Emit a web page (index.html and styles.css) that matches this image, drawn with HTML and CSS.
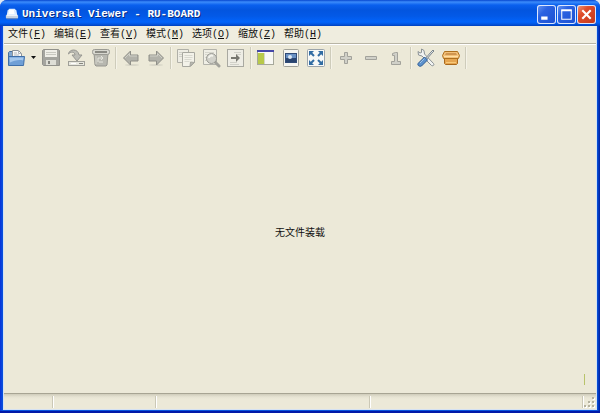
FILE: index.html
```html
<!DOCTYPE html>
<html lang="zh-CN">
<head>
<meta charset="utf-8">
<meta name="viewport" content="width=device-width, initial-scale=1">
<title>Universal Viewer - RU-BOARD</title>
<link rel="stylesheet" href="styles.css">
</head>
<body>
<div class="window">
  <header class="titlebar">
    <svg class="app-icon" viewBox="0 0 16 16" aria-hidden="true"><path d="M3 4l2-2h6l2 2 1 5H2z" fill="#dcecff"/><path d="M5 3h5l1 5H4z" fill="#fff"/><rect x="1" y="9" width="14" height="4" rx="1" fill="#c9d3e0"/><path d="M2 9.500h12" stroke="#fff"/><path d="M2 13.500h12" stroke="#697fa8"/></svg>
    <h1 class="title">Universal Viewer - RU-BOARD</h1>
    <div class="controls">
      <button class="control" type="button" aria-label="最小化"><svg viewBox="0 0 18 18"><path d="M4 12.500h6" stroke="#fff" stroke-width="3"/></svg></button>
      <button class="control" type="button" aria-label="最大化"><svg viewBox="0 0 18 18"><path d="M4.500 5v8.500h9V5" fill="none" stroke="#fff"/><path d="M4 5h10" stroke="#fff" stroke-width="2"/></svg></button>
      <button class="control control-close" type="button" aria-label="关闭"><svg viewBox="0 0 18 18"><path d="M5 5l8 8M13 5l-8 8" stroke="#fff" stroke-width="2"/></svg></button>
    </div>
  </header>
  <div class="client">
    <nav class="menubar">
      <button class="menu" type="button">文件(<u>F</u>)</button>
      <button class="menu" type="button">编辑(<u>E</u>)</button>
      <button class="menu" type="button">查看(<u>V</u>)</button>
      <button class="menu" type="button">模式(<u>M</u>)</button>
      <button class="menu" type="button">选项(<u>O</u>)</button>
      <button class="menu" type="button">缩放(<u>Z</u>)</button>
      <button class="menu" type="button">帮助(<u>H</u>)</button>
    </nav>
    <div class="toolbar" role="toolbar">
      <button class="tool" type="button" aria-label="打开"><svg viewBox="0 0 20 20"><path d="M2.500 16V4.500l1-1h4l1 2h7V16z" fill="#83a8d0" stroke="#466f9e"/><path d="M6.500 10V2.500h6l3 3V10z" fill="#fafafa" stroke="#8c9297"/><path d="M12.500 2.500v3h3M8 5h3M8 7h5" fill="none" stroke="#b3b8bc"/><path d="M2.500 8.500h16l-1 9H2.500z" fill="#6f9fd6" stroke="#3f6fa9"/><path d="M3.500 9.500h14l-.500 3c-4-1-9 0-13 2z" fill="#a5c8ed"/></svg></button>
      <button class="tool tool-drop" type="button" aria-label="最近的文件"><svg viewBox="0 0 7 20"><path d="M1 8h5L3.500 11z" fill="#111"/></svg></button>
      <button class="tool" type="button" aria-label="保存"><svg viewBox="0 0 20 20"><path d="M1.500 2.500l1-1h15l1 1v15h-16l-1-1z" fill="#a5a59f" stroke="#92928c"/><path d="M4 2h12v7H4z" fill="#f0efe8"/><path d="M5 4.500h10M5 6.500h10" stroke="#c9c9c1"/><path d="M5 12h10v5H5z" fill="#deded6"/><path d="M7 13h2v3H7z" fill="#85857f"/></svg></button>
      <button class="tool" type="button" aria-label="另存为"><svg viewBox="0 0 20 20"><path d="M2.500 6C3 1 12 0 13 7h3l-5 6-5-6h3C9 4 5 3 2.500 6z" fill="#bdbdb5" stroke="#969690"/><rect x="2.500" y="13.500" width="16" height="4" fill="#e8e8df" stroke="#a0a099"/><path d="M13 15.500h4" stroke="#85857f"/><path d="M5 15.500h5" stroke="#fff"/></svg></button>
      <button class="tool" type="button" aria-label="删除"><svg viewBox="0 0 20 20"><path d="M3 5h14l-1 12-1 1H5l-1-1z" fill="#b8b8b0" stroke="#979790"/><rect x="1.500" y="1.500" width="17" height="5" rx="2" fill="#d7d7cf" stroke="#9b9b94"/><path d="M4 4h12" stroke="#8a8a83" stroke-width="2"/><path d="M7 14V10h5m-2-2l2 2-2 2M12 14H8" fill="none" stroke="#e7e7df"/><path d="M5 8v8" stroke="#d5d5cd"/></svg></button>
      <span class="divider"></span>
      <button class="tool" type="button" aria-label="上一个"><svg viewBox="0 0 20 20"><ellipse cx="11" cy="17" rx="7" ry="1" fill="#d8d6c8"/><path d="M2.500 10l7-7v4h7.500v6H9.500v4z" fill="#b2b2aa" stroke="#8f8f88"/><path d="M4 10l4.500-4.500V8H16" fill="none" stroke="#cfcfc6"/></svg></button>
      <button class="tool" type="button" aria-label="下一个"><svg viewBox="0 0 20 20"><ellipse cx="10" cy="17" rx="7" ry="1" fill="#d8d6c8"/><path d="M17.500 10l-7-7v4H3v6h7.500v4z" fill="#b2b2aa" stroke="#8f8f88"/><path d="M4 8h7.500V5.500L16 10" fill="none" stroke="#cfcfc6"/></svg></button>
      <span class="divider"></span>
      <button class="tool" type="button" aria-label="复制"><svg viewBox="0 0 20 20"><path d="M1.500 1.500h11v13h-11z" fill="#eeede4" stroke="#b0b0a8"/><path d="M3 4.500h3M3 6.500h3M3 8.500h3" stroke="#d0d0c8"/><path d="M6.500 4.500h12v10l-4 4h-8z" fill="#f3f2e9" stroke="#a8a8a0"/><path d="M8.500 7.500h8M8.500 9.500h8M8.500 11.500h7M8.500 13.500h5" stroke="#d9d9d0"/><path d="M14 18l.500-4 4 .500z" fill="#b9b9b1" stroke="#a5a59d"/></svg></button>
      <button class="tool" type="button" aria-label="查找"><svg viewBox="0 0 20 20"><path d="M2.500 1.500h13v15h-13z" fill="#efeee5" stroke="#b3b3ab"/><path d="M4 4.500h9M4 6.500h3M4 9.500h2M4 12.500h3" stroke="#d5d5cc"/><path d="M14 14l4 4" stroke="#a2a29b" stroke-width="3" stroke-linecap="round"/><circle cx="10.500" cy="10.500" r="5" fill="#d1d1ca" stroke="#9a9a93"/><path d="M8 10c0-2 2-3 4-2" fill="none" stroke="#f3f3ec" stroke-width="2"/></svg></button>
      <button class="tool" type="button" aria-label="转到"><svg viewBox="0 0 20 20"><rect x="1.500" y="1.500" width="16" height="17" fill="#eeede5" stroke="#a9a9a1"/><path d="M8 4.500h7M10 6.500h5M4 14.500h7M4 16.500h9" stroke="#d0d0c8"/><path d="M5 9h5V6l4 4-4 4v-3H5z" fill="#777770"/></svg></button>
      <span class="divider"></span>
      <button class="tool" type="button" aria-label="导航面板"><svg viewBox="0 0 20 20"><rect x="1.500" y="2.500" width="16" height="14" fill="#f8f8f4" stroke="#a6a89b"/><path d="M1 3h17" stroke="#4547a8" stroke-width="2"/><path d="M2 5h6v11H2z" fill="#b8c94a"/><path d="M8.500 5v11" stroke="#d5d6c8"/></svg></button>
      <button class="tool" type="button" aria-label="适合图像"><svg viewBox="0 0 20 20"><rect x="2.500" y="1.500" width="15" height="17" rx="1" fill="#f6f6f2" stroke="#a0a199"/><path d="M4 5h12v10H4z" fill="#304b77"/><path d="M5 6h10v4H5z" fill="#6991c4"/><path d="M5 11l4-1 2 1 4-1v4H5z" fill="#29446f"/><circle cx="9" cy="9" r="2" fill="#dbe7f4"/></svg></button>
      <button class="tool" type="button" aria-label="全屏"><svg viewBox="0 0 20 20"><rect x="1.500" y="1.500" width="17" height="17" rx="1" fill="#f8f9f7" stroke="#9ba4ab"/><path d="M3 3h5L3 8zM17 3h-5l5 5zM3 17h5l-5-5zM17 17h-5l5-5z" fill="#326da3"/><path d="M4 4l4 4M16 4l-4 4M4 16l4-4M16 16l-4-4" stroke="#326da3" stroke-width="2"/></svg></button>
      <span class="divider"></span>
      <button class="tool" type="button" aria-label="放大"><svg viewBox="0 0 20 20"><path d="M8.500 4.500h3v4h4v3h-4v4h-3v-4h-4v-3h4z" fill="#d0d0c8" stroke="#a2a29b"/></svg></button>
      <button class="tool" type="button" aria-label="缩小"><svg viewBox="0 0 20 20"><path d="M4.500 8.500h11v3h-11z" fill="#d0d0c8" stroke="#a2a29b"/></svg></button>
      <button class="tool" type="button" aria-label="原始大小"><svg viewBox="0 0 20 20"><path d="M6.500 5.500l3-1h2v9h3v3h-9v-3h3v-6h-2z" fill="#d0d0c8" stroke="#a2a29b"/></svg></button>
      <span class="divider"></span>
      <button class="tool" type="button" aria-label="选项"><svg viewBox="0 0 20 20"><path d="M2 3.500L2.500 7 6 8l9.500 9.500c2 1 3-1 2-2L8.500 6 8 2.500 5.500 1v3.500L4 5z" fill="#f1f3f2" stroke="#8b9295"/><path d="M9 11l6-7 2-2 1 1-2 2-6 7z" fill="#e2e6e8" stroke="#7d878e"/><path d="M8.500 9l3 3-6 6c-2 1-5-1-3-3z" fill="#5c91cc" stroke="#2e5c94"/><path d="M4 15l4.500-4.500" stroke="#a1c4e8"/></svg></button>
      <button class="tool" type="button" aria-label="插件"><svg viewBox="0 0 20 20"><path d="M3.500 9.500h13v6l-1 1h-11l-1-1z" fill="#e5a550" stroke="#a9681b"/><path d="M3.500 3.500h13l2 4-1 3H2.500l-1-3z" fill="#f3c078" stroke="#ad701f"/><path d="M5 5h10l1 2H4z" fill="#cf9550"/><path d="M3 8.500h14" stroke="#ffe0a3"/><path d="M5 14.500h10" stroke="#f8c979"/></svg></button>
      <span class="divider"></span>
    </div>
    <main class="viewer">
      <p class="message">无文件装载</p>
      <span class="mark"></span>
    </main>
    <footer class="statusbar">
      <span class="panel"></span>
      <span class="panel"></span>
      <span class="panel"></span>
      <span class="panel"></span>
      <svg class="grip" viewBox="0 0 12 12" aria-hidden="true"><path d="M9 1h2v2H9zM5 5h2v2H5zM9 5h2v2H9zM1 9h2v2H1zM5 9h2v2H5zM9 9h2v2H9z" fill="#fff"/><path d="M8 0h2v2H8zM4 4h2v2H4zM8 4h2v2H8zM0 8h2v2H0zM4 8h2v2H4zM8 8h2v2H8z" fill="#b5b29f"/></svg>
    </footer>
  </div>
</div>
</body>
</html>
```
FILE: styles.css
```css
* {
  box-sizing: border-box;
}

body {
  margin: 0;
  background: #dfe8f4;
  color: #111;
  font: 10px/14px "Liberation Mono", "Noto Sans CJK SC", monospace;
}

button {
  margin: 0;
  padding: 0;
  border: 0;
  background: none;
  color: inherit;
  font: inherit;
}

svg {
  display: block;
}

.window {
  display: flex;
  flex-direction: column;
  min-height: 100vh;
  padding: 0 3px 3px;
  overflow: hidden;
  border-radius: 7px 7px 0 0;
  background: linear-gradient(90deg, #0831d9 0, #0855dd 3px, #0855dd calc(100% - 3px), #001ea0 100%);
  box-shadow: inset 0 -2px #0019a8;
}

.titlebar {
  display: flex;
  align-items: center;
  gap: 3px;
  height: 26px;
  margin: 0 -3px;
  padding: 2px 4px 0 5px;
  background: linear-gradient(#0646cf 0, #3c8cfb 2px, #0a60ee 5px, #0355df 10px, #0359e7 16px, #0264fb 22px, #0256e2 24px, #0140bd 100%);
}

.app-icon {
  width: 14px;
  height: 14px;
}

.title {
  flex: 1;
  margin: 0;
  color: #fff;
  font-size: 11px;
  line-height: 14px;
  text-shadow: 1px 1px #0a2d80;
  white-space: nowrap;
}

.controls {
  display: flex;
  gap: 1px;
}

.control {
  width: 19px;
  height: 19px;
  border-radius: 3px;
  background: linear-gradient(135deg, #6e9bf3, #2a62e2 35%, #1c4fd0);
  box-shadow: inset 0 0 0 1px #dce7ff;
}

.control-close {
  background: linear-gradient(135deg, #f0a080, #df4d2b 35%, #c2381a);
}

.client {
  display: flex;
  flex: 1;
  flex-direction: column;
  border: 1px solid #d5e2f3;
  border-top: 0;
  background: #ece9d8;
}

.menubar {
  display: flex;
  height: 18px;
  padding-left: 4px;
  border-bottom: 1px solid #b8b5a5;
  background: #efeddf;
}

.menu {
  width: 46px;
  line-height: 18px;
  text-align: left;
  white-space: nowrap;
}

.toolbar {
  display: flex;
  align-items: center;
  gap: 1px;
  height: 26px;
  border-top: 1px solid #fff;
}

.tool {
  width: 24px;
  padding: 0 2px;
}

.tool-drop {
  width: 9px;
  padding: 0 1px;
}

.divider {
  width: 2px;
  height: 22px;
  margin: 0 1px;
  border-left: 1px solid #ceccbb;
  border-right: 1px solid #f5f3e8;
}

.viewer {
  display: grid;
  flex: 1;
  place-items: center;
}

.message,
.mark {
  grid-area: 1 / 1;
}

.message {
  margin: 0;
  padding-top: 4px;
}

.mark {
  place-self: end;
  width: 1px;
  height: 11px;
  margin: 0 11px 8px;
  background: #b8c36a;
}

.statusbar {
  display: grid;
  grid-template-columns: 50px 103px 214px 1fr 12px;
  height: 16px;
  border-top: 1px solid #a7a493;
  background: linear-gradient(#cfccba, #e6e3d3 3px, #ece9d8 5px);
}

.panel {
  margin: 2px 0 1px;
  border-right: 1px solid #fff;
  box-shadow: inset -1px 0 #cbc8b6;
}

.grip {
  align-self: end;
  width: 12px;
  height: 12px;
}
```
